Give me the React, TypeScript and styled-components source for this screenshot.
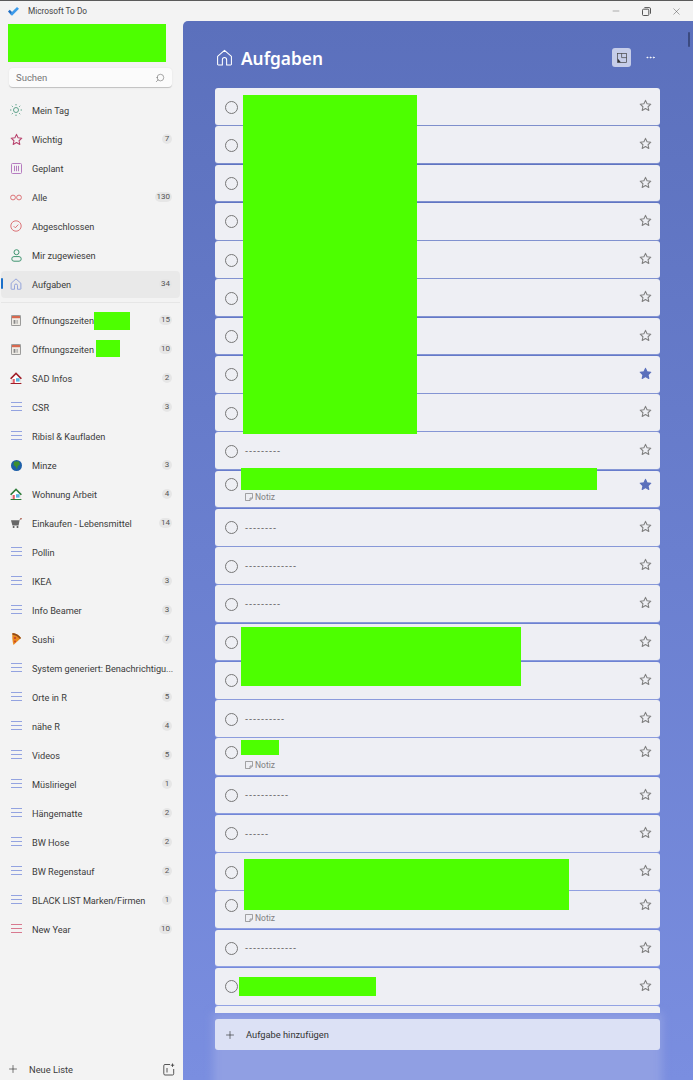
import type { ReactNode } from 'react';
import styled, { createGlobalStyle } from 'styled-components';
import { Plus, Search, Minus, X, MoreHorizontal } from 'lucide-react';

const GlobalStyle = createGlobalStyle`
  html, body {
    height: 100%;
    margin: 0;
    overflow: hidden;
  }

  body {
    background: #f3f3f3;
    font-family: Roboto, 'Noto Sans', sans-serif;
    color: #333;
  }
`;

const Window = styled.div`
  width: 693px;
  height: 1080px;
  display: flex;
  flex-direction: column;
  border-top: 1px solid #5a5a5a;
  box-sizing: border-box;
  background: #f3f3f3;
  overflow: hidden;
`;

const TitleBar = styled.div`
  height: 20px;
  flex: none;
  display: flex;
  align-items: center;
  padding-left: 8px;
  font-size: 8.3px;
  color: #444;
`;

const AppName = styled.span`
  margin-left: 9px;
`;

const WindowButtons = styled.div`
  margin-left: auto;
  display: flex;
  align-items: center;
  gap: 20.5px;
  padding-right: 11px;
  color: #444;
`;

const Body = styled.div`
  flex: 1;
  min-height: 0;
  display: flex;
`;

const Sidebar = styled.aside`
  width: 183px;
  flex: none;
  display: flex;
  flex-direction: column;
  position: relative;
`;

const Redaction = styled.div<{ $x: number; $y: number; $w: number; $h: number }>`
  position: absolute;
  left: ${p => p.$x}px;
  top: ${p => p.$y}px;
  width: ${p => p.$w}px;
  height: ${p => p.$h}px;
  background: #4dff00;
`;

const AccountBlock = styled.div`
  width: 158px;
  height: 38px;
  margin: 3px 0 0 8px;
  background: #4dff00;
  flex: none;
`;

const SearchBox = styled.div`
  margin: 6px 11px 0 9px;
  height: 20px;
  flex: none;
  box-sizing: border-box;
  background: #fbfbfb;
  border-radius: 4px;
  border-bottom: 1px solid #c4c4c4;
  box-shadow: 0 0 2px rgba(0, 0, 0, 0.08);
  display: flex;
  align-items: center;
  justify-content: space-between;
  padding: 0 7px;
  font-size: 9.5px;
  color: #777;
`;

const SearchGlyph = styled(Search)`
  transform: scaleX(-1);
  color: #555;
`;

const Nav = styled.nav`
  margin-top: 7.5px;
  display: flex;
  flex-direction: column;
`;

const NavItem = styled.div<{ $active?: boolean }>`
  position: relative;
  height: 27px;
  box-sizing: border-box;
  display: flex;
  align-items: center;
  margin: 1px 3px 1px 1px;
  padding: 0 8px 0 7px;
  font-size: 9.2px;
  letter-spacing: -0.03px;
  color: #3c3c3c;
  border-radius: 4px;
  background: ${p => (p.$active ? '#e9e9e9' : 'transparent')};

  ${p =>
    p.$active &&
    `
    &::before {
      content: '';
      position: absolute;
      left: 0;
      top: 7px;
      width: 2px;
      height: 11px;
      border-radius: 1px;
      background: #1a6fc9;
    }
  `}
`;

const IconSlot = styled.span`
  width: 16px;
  height: 16px;
  flex: none;
  display: flex;
  align-items: center;
  justify-content: center;
  margin-right: 8px;
`;

const NavLabel = styled.span`
  flex: 1;
  min-width: 0;
  white-space: nowrap;
`;

const Badge = styled.span`
  flex: none;
  box-sizing: border-box;
  min-width: 10px;
  height: 10px;
  padding: 0 2px;
  margin-left: 4px;
  border-radius: 6px;
  background: #e6e6e6;
  color: #555;
  font-size: 8px;
  line-height: 10px;
  text-align: center;
`;

const Divider = styled.div`
  height: 1px;
  margin: 3px 3px 3px 1px;
  background: #e6e6e6;
`;

const SidebarFooter = styled.div`
  margin-top: auto;
  height: 22px;
  flex: none;
  display: flex;
  align-items: center;
  padding: 0 8px 0 7px;
  font-size: 9.3px;
  color: #3c3c3c;
`;

const NewList = styled.span`
  flex: 1;
  margin-left: 10px;
`;

const Main = styled.main`
  flex: 1;
  min-width: 0;
  position: relative;
  display: flex;
  flex-direction: column;
  border-top-left-radius: 5px;
  background: linear-gradient(180deg, #5b70bc 0%, #6a7fcf 50%, #7a8ee0 100%);
  overflow: hidden;
`;

const Header = styled.header`
  height: 67px;
  flex: none;
  box-sizing: border-box;
  display: flex;
  align-items: center;
  padding: 6px 37px 0 33px;
  color: #fff;
`;

const Heading = styled.h1`
  margin: 0 0 0 8px;
  padding-top: 1px;
  font-family: 'Noto Sans', sans-serif;
  font-size: 17.3px;
  font-weight: 600;
  color: #fff;
`;

const HeaderActions = styled.div`
  margin-left: auto;
  display: flex;
  align-items: center;
  gap: 14px;
`;

const ViewButton = styled.div`
  width: 19px;
  height: 19px;
  border-radius: 3px;
  background: #c6cde9;
  display: flex;
  align-items: center;
  justify-content: center;
`;

const Scrollbar = styled.div`
  position: absolute;
  right: 3px;
  top: 11px;
  width: 2px;
  height: 15px;
  border-radius: 1px;
  background: #3b4a80;
`;

const TaskArea = styled.div`
  position: relative;
  z-index: 1;
  flex: 1;
  min-height: 0;
  overflow: hidden;
  margin: 0 33px 0 32px;
  display: flex;
  flex-direction: column;
  gap: 1.5px;
`;

const Row = styled.div`
  flex: none;
  height: 36.75px;
  box-sizing: border-box;
  background: #eeeff4;
  border-radius: 3px;
  display: flex;
  align-items: center;
  padding: 0 8px 0 10px;
  box-shadow: 0 1px 0 rgba(255, 255, 255, 0.2);
`;

const Circle = styled.span<{ $raised?: boolean }>`
  width: 13px;
  height: 13px;
  flex: none;
  box-sizing: border-box;
  border: 1.6px solid #777;
  border-radius: 50%;
  align-self: flex-start;
  margin-top: ${p => (p.$raised ? '7.5px' : '12.5px')};
`;

const RowText = styled.div`
  flex: 1;
  margin-left: 7px;
  font-family: 'Noto Sans', sans-serif;
  font-size: 9.5px;
  color: #555;
  letter-spacing: 0.95px;
`;

const NoteLine = styled.div`
  display: flex;
  align-items: center;
  gap: 2px;
  margin-top: 17px;
  font-family: Roboto, sans-serif;
  font-size: 8.5px;
  letter-spacing: 0;
  color: #808080;
`;

const StarSlot = styled.span<{ $raised?: boolean }>`
  flex: none;
  display: flex;
  align-self: flex-start;
  margin-top: ${p => (p.$raised ? '7px' : '11px')};
`;

const BottomArea = styled.div`
  position: relative;
  height: 67px;
  flex: none;
  box-sizing: border-box;
  margin: 0 33px 0 32px;
  padding-top: 6px;

  &::before {
    content: '';
    position: absolute;
    inset: 0 -2px -20px -2px;
    background: #909fe3;
    filter: blur(4px);
  }
`;

const AddBar = styled.div`
  position: relative;
  height: 31px;
  box-sizing: border-box;
  border-radius: 3px;
  background: #dce1f5;
  display: flex;
  align-items: center;
  padding-left: 9px;
  font-size: 9.3px;
  color: #333;
`;

const AddLabel = styled.span`
  margin-left: 10px;
`;

const ListLines = ({ color = '#93a3e0' }: { color?: string }) => (
  <svg width="11" height="10" viewBox="0 0 11 10" fill="none" stroke={color} strokeWidth="1">
    <path d="M0 .5h11M0 4.5h11M0 8.5h11" />
  </svg>
);

const SunIcon = () => (
  <svg width="12" height="12" viewBox="0 0 12 12" fill="none" stroke="#4f9a80" strokeWidth="0.9">
    <circle cx="6" cy="6" r="2.5" />
    <path d="M6 0v1.4M6 10.6V12M0 6h1.4M10.6 6H12M1.8 1.8l1 1M9.2 9.2l1 1M10.2 1.8l-1 1M2.8 9.2l-1 1" />
  </svg>
);

const StarIcon = ({ fill = 'none', color = '#808080', size = 13 }: { fill?: string; color?: string; size?: number }) => (
  <svg width={size} height={size} viewBox="0 0 24 24" fill={fill} stroke={color} strokeWidth="2" strokeLinejoin="round">
    <path d="M12 2.5l2.9 6.3 6.9.8-5.1 4.7 1.4 6.8-6.1-3.4-6.1 3.4 1.4-6.8L2.2 9.6l6.9-.8z" />
  </svg>
);

const PlannedIcon = () => (
  <svg width="11" height="11" viewBox="0 0 11 11" fill="none" stroke="#b67cc0" strokeWidth="1">
    <rect x=".5" y=".5" width="10" height="10" rx="1" />
    <path d="M3.5 2.8v5.4M5.5 2.8v5.4M7.5 2.8v5.4" />
  </svg>
);

const InfinityIcon = () => (
  <svg width="12" height="7" viewBox="0 0 12 7" fill="none" stroke="#d9666b" strokeWidth="0.9">
    <circle cx="3" cy="3.5" r="2.4" />
    <circle cx="9" cy="3.5" r="2.4" />
  </svg>
);

const DoneIcon = () => (
  <svg width="12" height="12" viewBox="0 0 12 12" fill="none" stroke="#d9666b" strokeWidth="0.9">
    <circle cx="6" cy="6" r="5.2" />
    <path d="M3.7 6.2l1.6 1.6 3-3.2" />
  </svg>
);

const PersonIcon = () => (
  <svg width="11" height="13" viewBox="0 0 11 13" fill="none" stroke="#3f9470" strokeWidth="1">
    <circle cx="5.5" cy="3.2" r="2.5" />
    <rect x=".8" y="7.6" width="9.4" height="4.6" rx="2.2" />
  </svg>
);

const HomeIcon = ({ size = 12, color = '#7a8fd6', width = 1 }: { size?: number; color?: string; width?: number }) => (
  <svg width={size} height={size} viewBox="0 0 16 16" fill="none" stroke={color} strokeWidth={width} strokeLinejoin="round">
    <path d="M1.5 7L8 1.2 14.5 7v7.3a.7.7 0 0 1-.7.7H10V10a2 2 0 0 0-4 0v5H2.2a.7.7 0 0 1-.7-.7z" />
  </svg>
);

const CalendarIcon = () => (
  <svg width="10" height="11" viewBox="0 0 10 11">
    <rect x=".4" y=".4" width="9.2" height="10.2" rx=".8" fill="#efece6" stroke="#777" strokeWidth=".8" />
    <rect x="1" y="1" width="8" height="2.2" fill="#d8694f" />
    <rect x="2.6" y="5" width="1.8" height="3.8" fill="#888" />
    <rect x="5.6" y="5" width="1" height="3.8" fill="#999" />
  </svg>
);

const HouseEmoji = ({ roof = '#a01f2a', door = '#e0606a' }: { roof?: string; door?: string }) => (
  <svg width="12" height="12" viewBox="0 0 12 12">
    <path d="M1.5 5.5L6 1.5l4.5 4V12h-9z" fill="#fff" stroke="#d8c9c4" strokeWidth=".4" />
    <path d="M0 6.2L6 .2l6 6-1.3 1L6 2.6 1.3 7.2z" fill={roof} />
    <rect x="2.6" y="7" width="2.2" height="5" fill={door} />
    <rect x="6" y="6.2" width="3.6" height="3.4" fill="#58b6e0" />
    <rect x="0.6" y="11" width="10.8" height="1" fill={roof} />
  </svg>
);

const GlobeIcon = () => (
  <svg width="11" height="11" viewBox="0 0 11 11">
    <circle cx="5.5" cy="5.5" r="5.5" fill="#1d5fa8" />
    <path d="M3 1.5h5l1 3-2.2 1.5-.8 3.5-1.5-3L2.5 5z" fill="#3d8f2f" />
  </svg>
);

const CartIcon = () => (
  <svg width="11" height="10" viewBox="0 0 11 10">
    <path d="M0 2.2h8.6L7.6 7.4H1.4z" fill="#666" />
    <path d="M8.6 2.2L9.6 .8" fill="none" stroke="#777" strokeWidth=".8" />
    <circle cx="10" cy=".8" r=".8" fill="#a8432f" />
    <circle cx="2.6" cy="8.9" r="1" fill="#555" />
    <circle cx="6.5" cy="8.9" r="1" fill="#555" />
  </svg>
);

const PizzaIcon = () => (
  <svg width="9" height="12" viewBox="0 0 9 12">
    <path d="M.5 0C3.8 .3 7 2.2 9 5L1.5 12C.3 8 0 4 .5 0z" fill="#e98a1f" />
    <path d="M.5 0C3.8 .3 7 2.2 9 5l-1 1C6.2 3.6 3.6 2 .4 1.7z" fill="#8f4a18" />
    <circle cx="3" cy="5" r="1.1" fill="#c5392b" />
    <circle cx="3" cy="8.5" r=".9" fill="#c5392b" />
  </svg>
);

const NoteIcon = () => (
  <svg width="8" height="8" viewBox="0 0 8 8" fill="none" stroke="#808080" strokeWidth="0.7">
    <path d="M.5.5h7v4.5L5 7.5H.5zM5 7.5V5h2.5" />
  </svg>
);

const LayoutIcon = () => (
  <svg width="10" height="10" viewBox="0 0 10 10" fill="none" stroke="#444" strokeWidth="0.7">
    <rect x=".4" y=".4" width="9.2" height="9.2" />
    <path d="M4.6 .4v4.2h5" />
    <path d="M.8 5.4l3 3.8H.8z" fill="#333" stroke="none" />
  </svg>
);

const NewGroupIcon = () => (
  <svg width="12" height="13" viewBox="0 0 12 13" fill="none" stroke="#444" strokeWidth="0.9">
    <path d="M7 1.5H2a1.2 1.2 0 0 0-1.2 1.2v8.1A1.2 1.2 0 0 0 2 12h7.5a1.2 1.2 0 0 0 1.2-1.2V6" />
    <path d="M4 5v4.5M9.5 .5v3.4M7.8 2.2h3.4" />
  </svg>
);

const RestoreIcon = () => (
  <svg width="9" height="9" viewBox="0 0 9 9" fill="none" stroke="#444" strokeWidth="0.9">
    <rect x=".5" y="2.2" width="6.3" height="6.3" rx="1" />
    <path d="M2.4 .6h4.9a1.2 1.2 0 0 1 1.2 1.2v4.9" />
  </svg>
);

const LogoIcon = () => (
  <svg width="11" height="9" viewBox="0 0 11 9">
    <path d="M0 4.5l1.8-1.8L4 5 3.5 8.6z" fill="#1f6fc4" />
    <path d="M2.4 6.4L9 0l2 1.8L4 8.8z" fill="#3d9bea" />
  </svg>
);

type ListEntry = { label: string; count?: number; icon: ReactNode; active?: boolean };

const smartLists: ListEntry[] = [
  { label: 'Mein Tag', icon: <SunIcon /> },
  { label: 'Wichtig', count: 7, icon: <StarIcon color="#b8436d" /> },
  { label: 'Geplant', icon: <PlannedIcon /> },
  { label: 'Alle', count: 130, icon: <InfinityIcon /> },
  { label: 'Abgeschlossen', icon: <DoneIcon /> },
  { label: 'Mir zugewiesen', icon: <PersonIcon /> },
  { label: 'Aufgaben', count: 34, icon: <HomeIcon />, active: true },
];

const userLists: ListEntry[] = [
  { label: 'Öffnungszeiten', count: 15, icon: <CalendarIcon /> },
  { label: 'Öffnungszeiten', count: 10, icon: <CalendarIcon /> },
  { label: 'SAD Infos', count: 2, icon: <HouseEmoji /> },
  { label: 'CSR', count: 3, icon: <ListLines /> },
  { label: 'Ribisl & Kaufladen', icon: <ListLines /> },
  { label: 'Minze', count: 3, icon: <GlobeIcon /> },
  { label: 'Wohnung Arbeit', count: 4, icon: <HouseEmoji roof="#2f7d3a" /> },
  { label: 'Einkaufen - Lebensmittel', count: 14, icon: <CartIcon /> },
  { label: 'Pollin', icon: <ListLines /> },
  { label: 'IKEA', count: 3, icon: <ListLines /> },
  { label: 'Info Beamer', count: 3, icon: <ListLines /> },
  { label: 'Sushi', count: 7, icon: <PizzaIcon /> },
  { label: 'System generiert: Benachrichtigu...', icon: <ListLines /> },
  { label: 'Orte in R', count: 5, icon: <ListLines /> },
  { label: 'nähe R', count: 4, icon: <ListLines /> },
  { label: 'Videos', count: 5, icon: <ListLines /> },
  { label: 'Müsliriegel', count: 1, icon: <ListLines /> },
  { label: 'Hängematte', count: 2, icon: <ListLines /> },
  { label: 'BW Hose', count: 2, icon: <ListLines /> },
  { label: 'BW Regenstauf', count: 2, icon: <ListLines /> },
  { label: 'BLACK LIST Marken/Firmen', count: 1, icon: <ListLines /> },
  { label: 'New Year', count: 10, icon: <ListLines color="#d8798f" /> },
];

type Task = { text?: string; starred?: boolean; note?: boolean };

const tasks: Task[] = [
  {}, {}, {}, {}, {}, {}, {},
  { starred: true },
  {},
  { text: '---------' },
  { starred: true, note: true },
  { text: '--------' },
  { text: '-------------' },
  { text: '---------' },
  {}, {},
  { text: '----------' },
  { note: true },
  { text: '-----------' },
  { text: '------' },
  {},
  { note: true },
  { text: '-------------' },
  {},
  {},
];

const renderEntry = (entry: ListEntry, index: number) => (
  <NavItem key={entry.label + index} $active={entry.active}>
    <IconSlot>{entry.icon}</IconSlot>
    <NavLabel>{entry.label}</NavLabel>
    {entry.count !== undefined && <Badge>{entry.count}</Badge>}
  </NavItem>
);

export default function App() {
  return (
    <>
      <GlobalStyle />
      <Window>
        <TitleBar>
          <LogoIcon />
          <AppName>Microsoft To Do</AppName>
          <WindowButtons>
            <Minus size={10} strokeWidth={1} />
            <RestoreIcon />
            <X size={11} strokeWidth={1} />
          </WindowButtons>
        </TitleBar>
        <Body>
          <Sidebar>
            <AccountBlock />
            <SearchBox>
              Suchen
              <SearchGlyph size={10} strokeWidth={1.2} />
            </SearchBox>
            <Nav>
              {smartLists.map(renderEntry)}
              <Divider />
              {userLists.map(renderEntry)}
            </Nav>
            <Redaction $x={94} $y={291} $w={36} $h={18} />
            <Redaction $x={96} $y={319} $w={24} $h={17} />
            <SidebarFooter>
              <Plus size={12} strokeWidth={1.2} color="#222" />
              <NewList>Neue Liste</NewList>
              <NewGroupIcon />
            </SidebarFooter>
          </Sidebar>
          <Main>
            <Scrollbar />
            <Header>
              <HomeIcon size={17} color="#fff" />
              <Heading>Aufgaben</Heading>
              <HeaderActions>
                <ViewButton>
                  <LayoutIcon />
                </ViewButton>
                <MoreHorizontal size={11} color="#fff" />
              </HeaderActions>
            </Header>
            <TaskArea>
              {tasks.map((task, i) => (
                <Row key={i}>
                  <Circle $raised={task.note} />
                  <RowText>
                    {task.note ? (
                      <NoteLine>
                        <NoteIcon />
                        Notiz
                      </NoteLine>
                    ) : (
                      task.text
                    )}
                  </RowText>
                  <StarSlot $raised={task.note}>
                    {task.starred ? <StarIcon fill="#5b70bc" color="#5b70bc" /> : <StarIcon />}
                  </StarSlot>
                </Row>
              ))}
              <Redaction $x={28} $y={7} $w={174} $h={339} />
              <Redaction $x={26} $y={380} $w={356} $h={22} />
              <Redaction $x={26} $y={539} $w={280} $h={59} />
              <Redaction $x={26} $y={652} $w={38} $h={15} />
              <Redaction $x={29} $y={771} $w={325} $h={51} />
              <Redaction $x={24} $y={889} $w={137} $h={19} />
            </TaskArea>
            <BottomArea>
              <AddBar>
                <Plus size={12} strokeWidth={1.2} color="#222" />
                <AddLabel>Aufgabe hinzufügen</AddLabel>
              </AddBar>
            </BottomArea>
          </Main>
        </Body>
      </Window>
    </>
  );
}
